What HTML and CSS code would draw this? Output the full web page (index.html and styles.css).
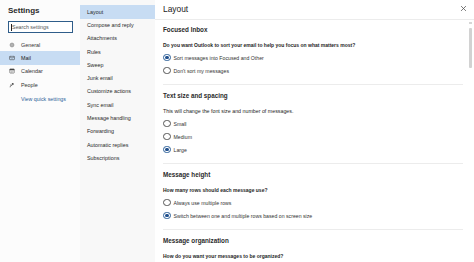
FILE: index.html
```html
<!DOCTYPE html>
<html>
<head>
<meta charset="utf-8">
<link rel="stylesheet" href="styles.css">
</head>
<body>
<div class="app">
  <nav class="nav">
    <div class="nav-title">Settings</div>
    <div class="search"><span class="caret"></span>Search settings</div>
    <ul class="nav-list">
      <li class="nav-item">
        <svg class="ico" viewBox="0 0 16 16"><circle cx="8" cy="8" r="2.3" fill="none" stroke="#555" stroke-width="1.3"/><path d="M8 1.5v2M8 12.5v2M1.5 8h2M12.5 8h2M3.4 3.4l1.4 1.4M11.2 11.2l1.4 1.4M3.4 12.6l1.4-1.4M11.2 4.8l1.4-1.4" stroke="#555" stroke-width="1.3"/><circle cx="8" cy="8" r="4.6" fill="none" stroke="#555" stroke-width="1.2"/></svg>
        General</li>
      <li class="nav-item active">
        <svg class="ico" viewBox="0 0 16 16"><rect x="1.5" y="3.5" width="13" height="9" rx="1.5" fill="none" stroke="#333" stroke-width="1.4"/><path d="M2 4.5l6 4 6-4" fill="none" stroke="#333" stroke-width="1.4"/></svg>
        Mail</li>
      <li class="nav-item">
        <svg class="ico" viewBox="0 0 16 16"><rect x="2" y="2.5" width="12" height="11" rx="1.5" fill="none" stroke="#444" stroke-width="1.4"/><rect x="2" y="2.5" width="12" height="3.5" fill="#444"/><path d="M5 8.5h1.5M7.5 8.5h1.5M10 8.5h1.5M5 11h1.5M7.5 11h1.5" stroke="#444" stroke-width="1.3"/></svg>
        Calendar</li>
      <li class="nav-item">
        <svg class="ico" viewBox="0 0 16 16"><circle cx="10" cy="5" r="2.6" fill="#444"/><path d="M3 14c0.5-3.5 2.8-5.5 5.5-5.5" fill="none" stroke="#444" stroke-width="2"/><circle cx="5" cy="8" r="1.6" fill="#444"/></svg>
        People</li>
    </ul>
    <a class="quick">View quick settings</a>
  </nav>

  <aside class="subnav">
    <ul>
      <li class="sub active">Layout</li>
      <li class="sub">Compose and reply</li>
      <li class="sub">Attachments</li>
      <li class="sub">Rules</li>
      <li class="sub">Sweep</li>
      <li class="sub">Junk email</li>
      <li class="sub">Customize actions</li>
      <li class="sub">Sync email</li>
      <li class="sub">Message handling</li>
      <li class="sub">Forwarding</li>
      <li class="sub">Automatic replies</li>
      <li class="sub">Subscriptions</li>
    </ul>
  </aside>

  <main class="main">
    <header class="main-head">
      <h1>Layout</h1>
      <svg class="close" viewBox="0 0 10 10"><path d="M1.5 1.5l7 7M8.5 1.5l-7 7" stroke="#555" stroke-width="1.1"/></svg>
    </header>
    <div class="body">
      <div class="content">
        <section class="sec first">
          <h2>Focused Inbox</h2>
          <p class="q">Do you want Outlook to sort your email to help you focus on what matters most?</p>
          <div class="radio on"><span class="dot"></span>Sort messages into Focused and Other</div>
          <div class="radio"><span class="dot"></span>Don't sort my messages</div>
        </section>
        <section class="sec">
          <h2>Text size and spacing</h2>
          <p class="q light">This will change the font size and number of messages.</p>
          <div class="radio"><span class="dot"></span>Small</div>
          <div class="radio"><span class="dot"></span>Medium</div>
          <div class="radio on"><span class="dot"></span>Large</div>
        </section>
        <section class="sec">
          <h2>Message height</h2>
          <p class="q">How many rows should each message use?</p>
          <div class="radio"><span class="dot"></span>Always use multiple rows</div>
          <div class="radio on"><span class="dot"></span>Switch between one and multiple rows based on screen size</div>
        </section>
        <section class="sec last">
          <h2>Message organization</h2>
          <p class="q">How do you want your messages to be organized?</p>
        </section>
      </div>
      <div class="scroll"><span class="arrow"></span><span class="thumb"></span></div>
    </div>
  </main>
</div>
</body>
</html>
```

FILE: styles.css
```css
* { box-sizing: border-box; margin: 0; padding: 0; }
html, body { width: 474px; height: 262px; overflow: hidden; background: #fff; }
body { font-family: "Liberation Sans", Arial, sans-serif; color: #242424; }
ul { list-style: none; }

.app { display: flex; height: 262px; }

.nav { width: 80px; background: #fcfcfc; padding-top: 4px; }
.nav-title { font-size: 8px; font-weight: bold; padding-left: 8px; height: 14px; line-height: 14px; color: #2a2a2a; }
.search {
  margin: 3px 0 0 8px; width: 65px; height: 12px;
  border: 1px solid #2f5d8a; background: #fff;
  font-size: 5.3px; line-height: 10px; color: #555; padding-left: 2px;
  display: flex; align-items: center;
}
.caret { width: 0.6px; height: 7px; background: #222; margin-right: 0.5px; }
.nav-list { margin-top: 5px; }
.nav-item { height: 13.4px; display: flex; align-items: center; font-size: 5.4px; color: #333; padding-left: 9px; }
.nav-item .ico { width: 6px; height: 6px; margin-right: 6px; }
.nav-item.active { background: #c7dcf3; color: #1b1b1b; }
.quick { display: block; font-size: 5.3px; color: #2b5f99; padding-left: 21px; margin-top: 1px; line-height: 13px; }

.subnav { width: 75px; background: #f8f8f8; padding-top: 5px; }
.sub { height: 13.3px; line-height: 13.3px; font-size: 5.4px; padding-left: 7px; color: #2a2a2a; }
.sub.active { background: #c7dcf3; height: 14px; line-height: 14px; }

.main { flex: 1; display: flex; flex-direction: column; background: #fff; }
.main-head { height: 23px; border-bottom: 1px solid #ececec; display: flex; align-items: center; justify-content: space-between; padding: 0 8px 1px 8px; }
.main-head h1 { font-size: 8.4px; font-weight: normal; color: #222; }
.close { width: 7px; height: 7px; margin-right: -1px; margin-top: -2px; }

.body { flex: 1; display: flex; }
.content { flex: 1; padding-left: 8px; }
.sec { border-top: 1px solid #ececec; padding-top: 5px; padding-bottom: 7px; }
.sec.first { border-top: none; padding-top: 4px; }
.sec.last { padding-bottom: 0; }
.sec h2 { font-size: 6.3px; font-weight: bold; height: 12px; line-height: 12px; color: #2a2a2a; }
.q { font-size: 5px; font-weight: bold; height: 12px; line-height: 12px; margin-top: 3px; color: #1e1e1e; }
.q.light { font-weight: normal; font-size: 5.3px; }
.radio { height: 13px; display: flex; align-items: center; font-size: 5.2px; color: #333; }
.dot { width: 7.5px; height: 7.5px; border-radius: 50%; border: 0.8px solid #555; margin-right: 3px; position: relative; flex: none; }
.radio.on .dot { border-color: #2b5f99; }
.radio.on .dot::after { content: ""; position: absolute; left: 1.3px; top: 1.3px; width: 3.4px; height: 3.4px; border-radius: 50%; background: #1f4f8c; }

.scroll { width: 11px; display: flex; flex-direction: column; align-items: center; padding-top: 2px; }
.arrow { width: 3px; height: 2px; background: #d6d6d6; margin-left: 4px; }
.thumb { width: 3px; height: 40px; background: #d2d2d2; margin-top: 4px; margin-left: 4px; border-radius: 1px; }
```
